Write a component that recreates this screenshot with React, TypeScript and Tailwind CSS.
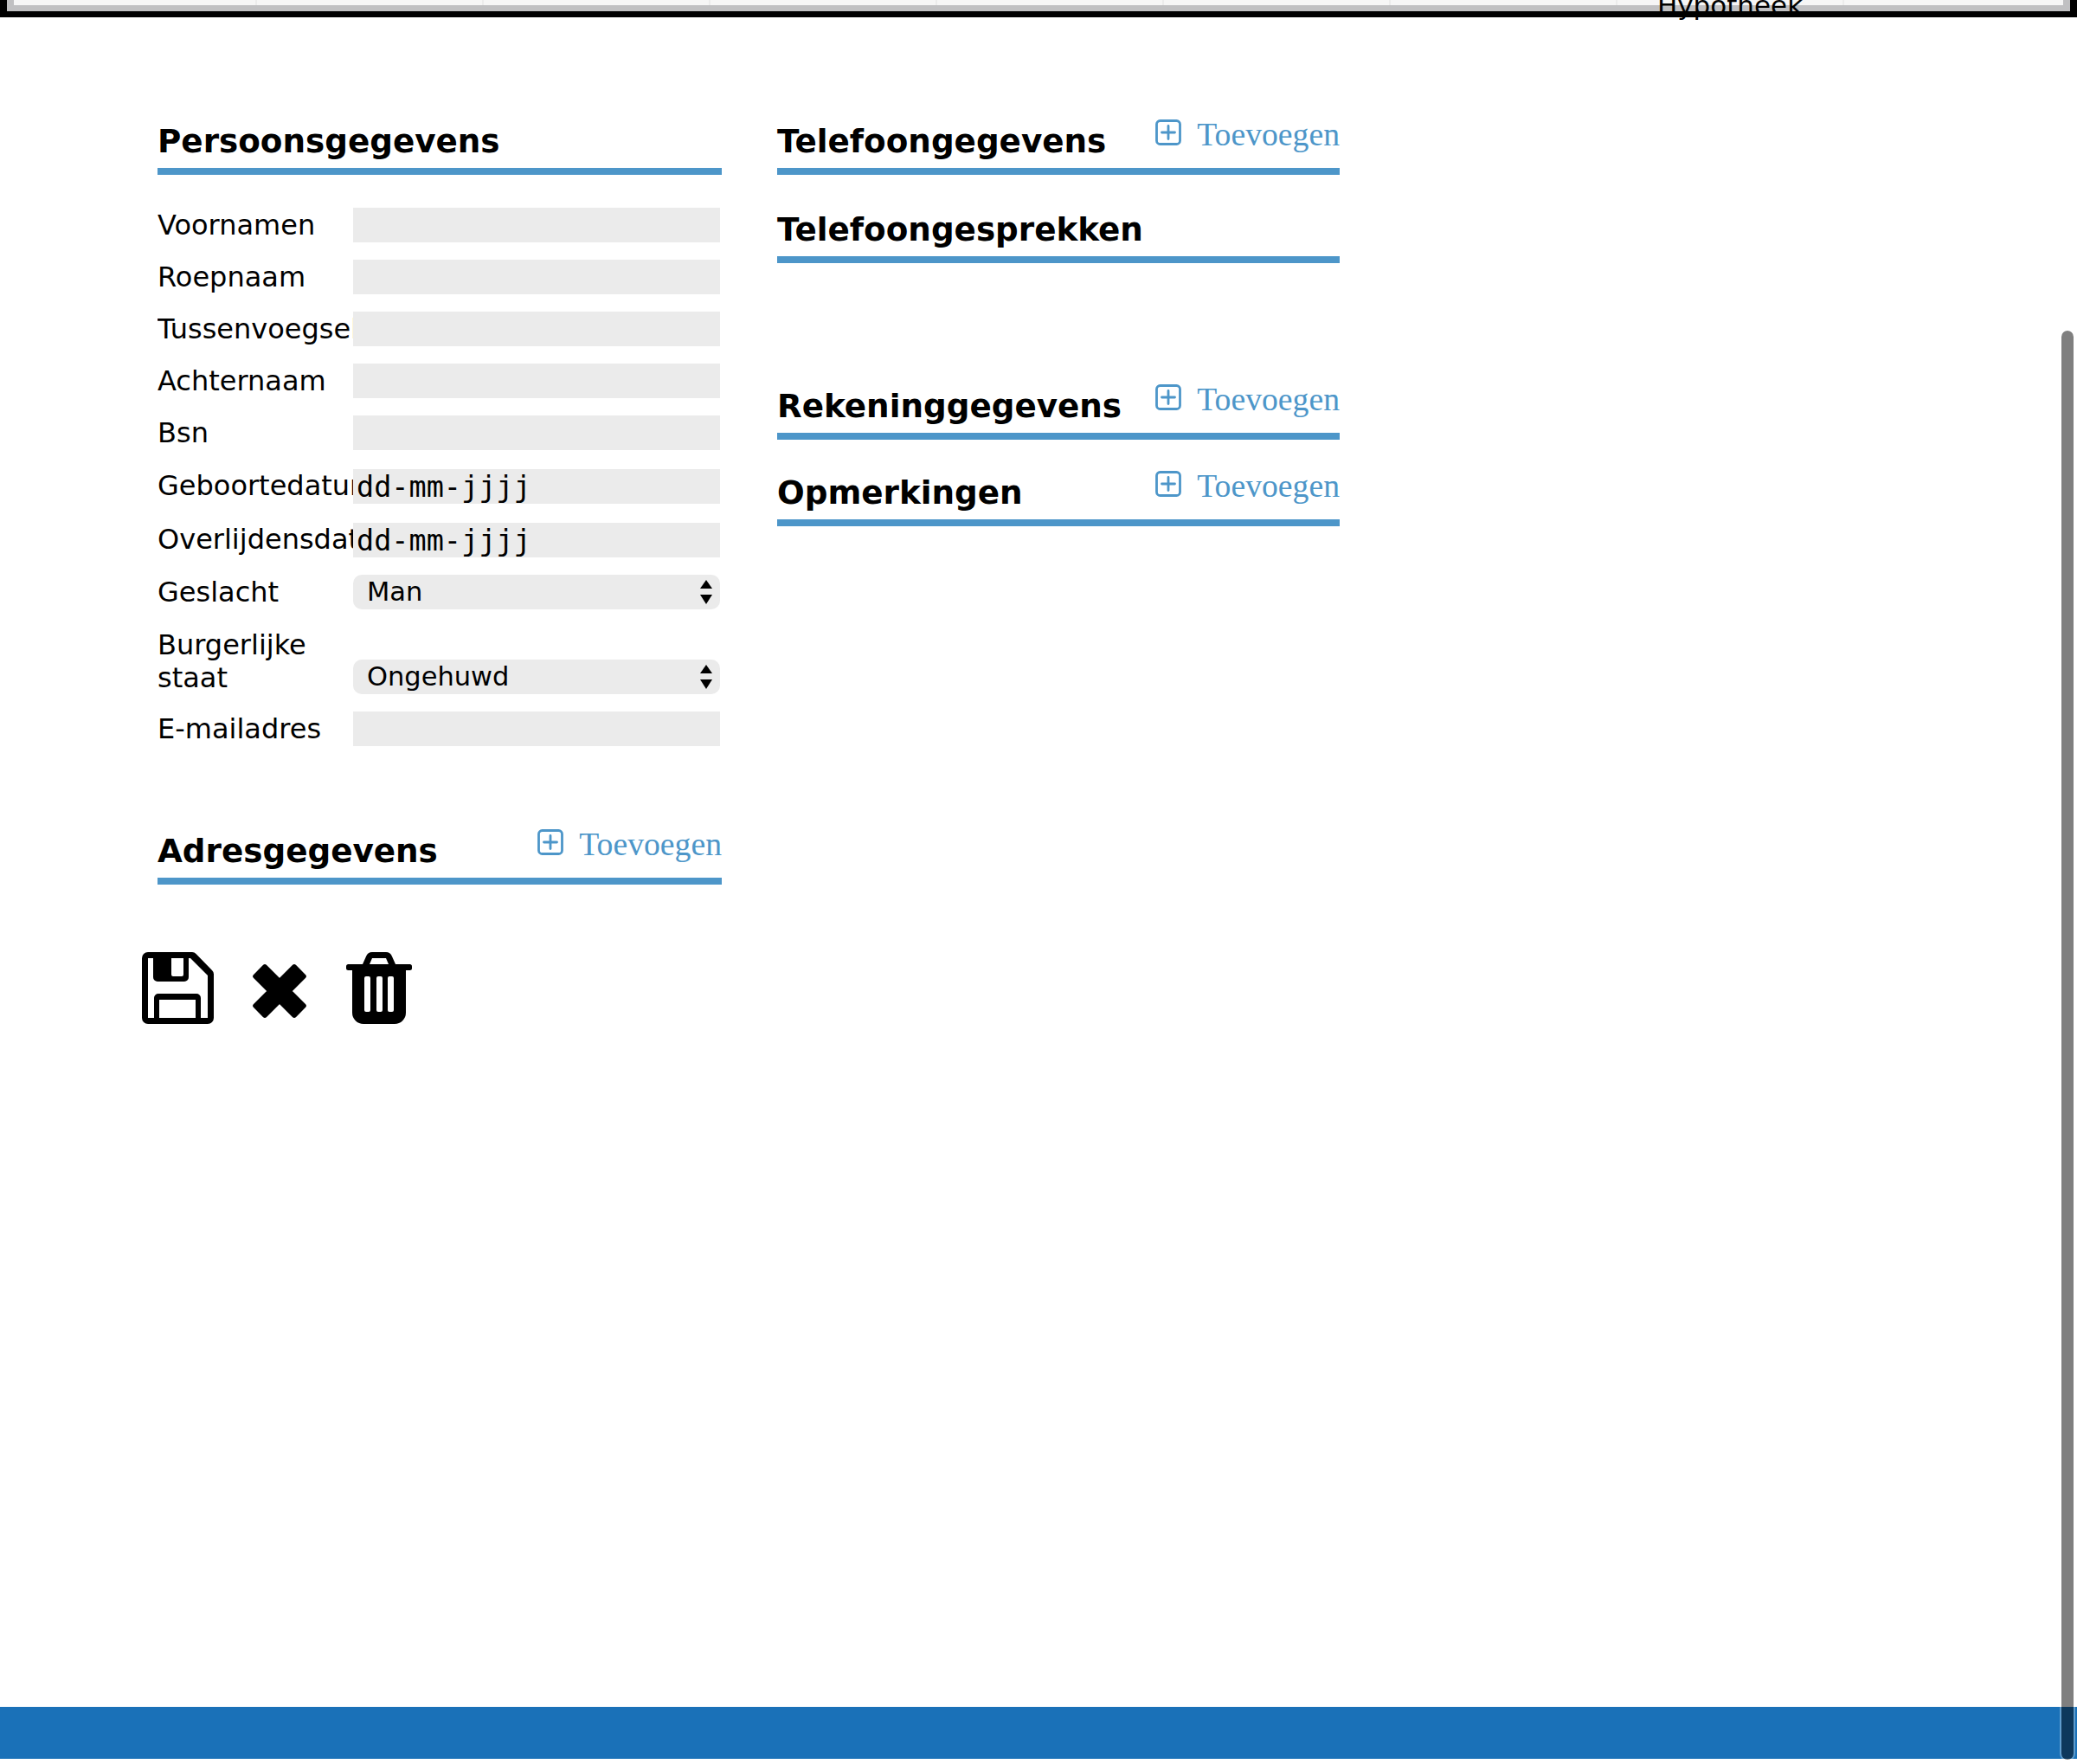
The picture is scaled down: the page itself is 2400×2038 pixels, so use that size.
import React from "react";

const blue = "border-[#4d96c9]";

function PlusIcon() {
  return (
    <svg width="30" height="30" viewBox="0 0 30 30" fill="none" stroke="#4d96c9" strokeWidth="2.8" strokeLinecap="round">
      <rect x="1.5" y="1.5" width="27" height="27" rx="4" />
      <path d="M15 7.5v15M7.5 15h15" />
    </svg>
  );
}

function SaveIcon() {
  return (
    <svg width="83" height="83" viewBox="0 0 83 83" fill="#000">
      <path
        fillRule="evenodd"
        d="M7 0H58a6 6 0 0 1 4.5 2L81 21a6 6 0 0 1 2 4.5V76a7 7 0 0 1-7 7H7a7 7 0 0 1-7-7V7a7 7 0 0 1 7-7zM7 7V76H76V27L56 7z"
      />
      <path
        fillRule="evenodd"
        d="M13 7H54V29a5 5 0 0 1-5 5H18a5 5 0 0 1-5-5zM34 7V26a2 2 0 0 0 2 2H46a2 2 0 0 0 2-2V7z"
      />
      <path d="M14 76V53a5 5 0 0 1 5-5H63a5 5 0 0 1 5 5V76H62V55H20V76z" />
    </svg>
  );
}

function CloseIcon() {
  return (
    <svg width="64" height="64" viewBox="0 0 64 64" fill="#000" stroke="#000" strokeWidth="6" strokeLinejoin="round" className="mt-[13px]">
      <path d="M15 4.2L32 21.2L49 4.2L59.8 15L42.8 32L59.8 49L49 59.8L32 42.8L15 59.8L4.2 49L21.2 32L4.2 15z" />
    </svg>
  );
}

function TrashIcon() {
  return (
    <svg width="76" height="83" viewBox="0 0 76 83" fill="#000" className="ml-[1px]">
      <path
        fillRule="evenodd"
        d="M19 14L23 5Q25 0 30 0H46Q51 0 53 5L57 14zM27 14H49L46 7H30z"
      />
      <rect x="0" y="14" width="76" height="7" rx="2.5" />
      <path
        fillRule="evenodd"
        d="M7 20H69V70a13 13 0 0 1-13 13H20a13 13 0 0 1-13-13zM21 30V67a2 2 0 0 0 2 2H26a2 2 0 0 0 2-2V30a2 2 0 0 0-2-2H23a2 2 0 0 0-2 2zM35 30V67a2 2 0 0 0 2 2H40a2 2 0 0 0 2-2V30a2 2 0 0 0-2-2H37a2 2 0 0 0-2 2zM48 30V67a2 2 0 0 0 2 2H53a2 2 0 0 0 2-2V30a2 2 0 0 0-2-2H50a2 2 0 0 0-2 2z"
      />
    </svg>
  );
}

function SectionHeader({ title, add, className }: { title: string; add?: boolean; className?: string }) {
  return (
    <div className={`flex justify-between items-start h-[64px] border-b-[8px] ${blue} ${className ?? ""}`}>
      <h2 className="font-['DejaVu_Sans',sans-serif] font-bold text-[37.3px] leading-[51px] text-black whitespace-nowrap">{title}</h2>
      {add && (
        <a className="flex items-start gap-[18px] text-[#4d96c9] font-['Liberation_Serif',serif] text-[37.7px] leading-[40px]">
          <PlusIcon />
          <span className="-mt-[3px]">Toevoegen</span>
        </a>
      )}
    </div>
  );
}

function Label({ children, wrap, className }: { children: React.ReactNode; wrap?: boolean; className?: string }) {
  return (
    <label
      className={`w-[226px] shrink-0 overflow-hidden ${wrap ? "pt-[2px] leading-[38px]" : "leading-[39px] whitespace-nowrap"} ${className ?? ""}`}
    >
      {children}
    </label>
  );
}

function TextRow({ label }: { label: string }) {
  return (
    <div className="flex items-end mb-[20px]">
      <Label>{label}</Label>
      <input type="text" className="w-[424px] h-[40px] bg-[#ebebeb] outline-none" />
    </div>
  );
}

function DateRow({ label }: { label: string }) {
  return (
    <div className="flex items-end mt-[22px] mb-[20px]">
      <Label className="mb-[1px]">{label}</Label>
      <input
        type="text"
        readOnly
        value="dd-mm-jjjj"
        className="w-[424px] h-[40px] pl-[4px] pt-[2px] bg-[#ebebeb] font-['DejaVu_Sans_Mono',monospace] text-[33.5px] outline-none"
      />
    </div>
  );
}

function SelectRow({ label, value, wrap }: { label: string; value: string; wrap?: boolean }) {
  return (
    <div className="flex items-end mb-[20px]">
      <Label wrap={wrap}>{label}</Label>
      <div className="relative w-[424px] h-[40px]">
        <select
          defaultValue={value}
          className="block w-full h-full pl-[16px] rounded-[10px] bg-[#ebebeb] appearance-none outline-none font-['DejaVu_Sans',sans-serif] text-[30.5px] leading-[40px]"
        >
          <option>{value}</option>
        </select>
        <svg width="16" height="28" viewBox="0 0 16 28" fill="#000" className="absolute right-[8px] top-[6px] pointer-events-none">
          <path d="M8 0L15 10H1z" />
          <path d="M1 17H15L8 28z" />
        </svg>
      </div>
    </div>
  );
}

export default function App() {
  return (
    <div className="relative h-[2038px] flex flex-col bg-white overflow-hidden font-['DejaVu_Sans',sans-serif] text-[32px] text-black">
      {/* Tab bar, scrolled almost out of view */}
      <div className="h-[20px] shrink-0 bg-[#c0c0c2] border-x-[8px] border-b-[7px] border-black">
        <div className="mx-[8px] h-[6px] bg-[#f6f6f6] flex">
          <div className="w-[281px] border-r-2 border-[#ececec]" />
          {[0, 1, 2, 3, 4, 5, 6].map((i) => (
            <div key={i} className="relative w-[262px] border-r-2 border-[#ececec]">
              {i === 6 && (
                <span className="absolute left-0 right-0 -top-[13px] text-center text-[31px] leading-[39px]">Hypotheek</span>
              )}
            </div>
          ))}
          <div className="flex-1" />
        </div>
      </div>

      <main className="flex-1 flex gap-[64px] pl-[182px] pt-[118px]">
        <section className="w-[652px]">
          <SectionHeader title="Persoonsgegevens" />
          <div className="mt-[38px] w-full">
            <TextRow label="Voornamen" />
            <TextRow label="Roepnaam" />
            <TextRow label="Tussenvoegsel" />
            <TextRow label="Achternaam" />
            <TextRow label="Bsn" />
            <DateRow label="Geboortedatum" />
            <DateRow label="Overlijdensdatum" />
            <SelectRow label="Geslacht" value="Man" />
            <SelectRow label="Burgerlijke staat" value="Ongehuwd" wrap />
            <TextRow label="E-mailadres" />
          </div>
          <SectionHeader title="Adresgegevens" add className="mt-[96px]" />
          <div className="flex items-start gap-[44px] mt-[78px] -ml-[18px]">
            <SaveIcon />
            <CloseIcon />
            <TrashIcon />
          </div>
        </section>

        <section className="w-[650px]">
          <SectionHeader title="Telefoongegevens" add />
          <SectionHeader title="Telefoongesprekken" className="mt-[38px]" />
          <SectionHeader title="Rekeninggegevens" add className="mt-[140px]" />
          <SectionHeader title="Opmerkingen" add className="mt-[36px]" />
        </section>
      </main>

      <footer className="h-[60px] shrink-0 mb-[6px] bg-[#1a71b8]" />

      {/* Overlay scrollbar */}
      <div className="absolute left-[2380px] top-[380px] w-[18px] h-[1655px] rounded-full border-2 border-white/30 bg-black/50 bg-clip-padding" />
    </div>
  );
}
